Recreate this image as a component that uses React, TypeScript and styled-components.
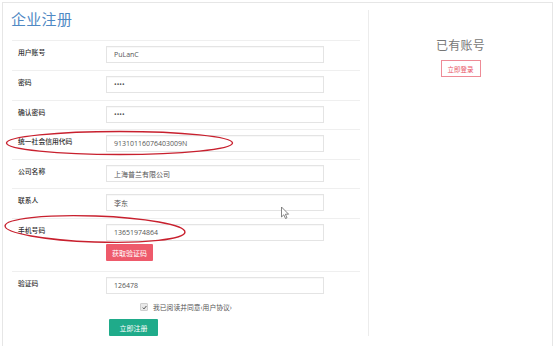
import React from 'react';
import styled, { createGlobalStyle } from 'styled-components';

const GlobalStyle = createGlobalStyle`
  html, body {
    margin: 0;
    padding: 0;
    background: #fff;
  }
  body {
    font-family: "Open Sans", "Noto Sans CJK SC", sans-serif;
  }
`;

const Page = styled.div`
  position: relative;
  width: 553px;
  height: 346px;
  overflow: hidden;
  padding: 2px 0 0 2px;
  box-sizing: border-box;
`;

const Frame = styled.div`
  display: flex;
  width: 551px;
  height: 360px;
  box-sizing: border-box;
  border: 1px solid #e6e6e6;
  padding-top: 7px;
`;

const LeftCol = styled.div`
  width: 366px;
  height: 326px;
  box-sizing: border-box;
  border-right: 1px solid #ececec;
  padding: 0 8px 0 9px;
  display: flex;
  flex-direction: column;
`;

const Title = styled.h1`
  margin: 0 0 12px -1px;
  font-size: 15px;
  line-height: 18px;
  font-weight: 400;
  color: #4f89c4;
  letter-spacing: 0.3px;
`;

const Row = styled.div<{ $h: number }>`
  display: flex;
  height: ${(p) => p.$h}px;
  box-sizing: border-box;
  border-top: 1px solid #efefef;
  padding: 5px 0 0 6px;
`;

const Label = styled.div`
  width: 88px;
  flex-shrink: 0;
  padding-top: 2px;
  font-size: 6.8px;
  line-height: 10px;
  font-weight: 500;
  color: #2f2f2f;
`;

const Field = styled.div`
  display: flex;
  flex-direction: column;
  align-items: flex-start;
`;

const Input = styled.div`
  width: 218px;
  height: 17px;
  box-sizing: border-box;
  border: 1px solid #e4e4e4;
  box-shadow: inset 0 1px 1px rgba(0, 0, 0, 0.03);
  padding-left: 7px;
  display: flex;
  align-items: center;
  font-size: 7px;
  color: #555;
`;

const Btn = styled.div<{ $bg: string; $w?: number }>`
  height: 17px;
  width: ${(p) => (p.$w ? `${p.$w}px` : 'auto')};
  padding: 0 ${(p) => (p.$w ? 0 : 6)}px;
  display: inline-flex;
  align-items: center;
  justify-content: center;
  background: ${(p) => p.$bg};
  color: #fff;
  font-size: 7px;
  border-radius: 1px;
`;

const VerifyBtn = styled(Btn)`
  margin-top: 3px;
`;

const SubmitBtn = styled(Btn)`
  margin: 7px 0 0 3px;
`;

const AgreeLine = styled.div`
  display: flex;
  align-items: center;
  gap: 5px;
  margin: 8px 0 0 34px;
  font-size: 6.8px;
  color: #555;
`;

const Check = styled.span`
  width: 6px;
  height: 6px;
  display: inline-flex;
  align-items: center;
  justify-content: center;
  background: #e9e9e9;
  border: 1px solid #cfcfcf;
  border-radius: 1px;
`;

const RightCol = styled.div`
  flex: 1;
  display: flex;
  flex-direction: column;
  align-items: center;
  padding-top: 29px;
`;

const Have = styled.div`
  font-size: 12px;
  line-height: 14px;
  color: #777;
  letter-spacing: 0.2px;
`;

const LoginBtn = styled.div`
  margin-top: 7px;
  width: 40px;
  height: 17px;
  box-sizing: border-box;
  border: 1px solid #ee8b96;
  color: #e85466;
  font-size: 6.5px;
  display: flex;
  align-items: center;
  justify-content: center;
`;

const Overlay = styled.svg`
  position: absolute;
  left: 0;
  top: 0;
  pointer-events: none;
`;

const rows: { label: string; value: string; h: number }[] = [
  { label: '用户账号', value: 'PuLanC', h: 30 },
  { label: '密码', value: '••••', h: 30 },
  { label: '确认密码', value: '••••', h: 29 },
  { label: '统一社会信用代码', value: '91310116076403009N', h: 30 },
  { label: '公司名称', value: '上海普兰有限公司', h: 29 },
  { label: '联系人', value: '李东', h: 30 },
];

export default function App() {
  return (
    <Page>
      <GlobalStyle />
      <Frame>
        <LeftCol>
          <Title>企业注册</Title>
          {rows.map((r) => (
            <Row key={r.label} $h={r.h}>
              <Label>{r.label}</Label>
              <Input>{r.value}</Input>
            </Row>
          ))}
          <Row $h={53}>
            <Label>手机号码</Label>
            <Field>
              <Input>13651974864</Input>
              <VerifyBtn $bg="#ee5a6b">获取验证码</VerifyBtn>
            </Field>
          </Row>
          <Row $h={65}>
            <Label>验证码</Label>
            <Field>
              <Input>126478</Input>
              <AgreeLine>
                <Check>
                  <svg width="5" height="5" viewBox="0 0 10 10">
                    <path d="M1.5 5.2 L4 7.8 L8.8 2" fill="none" stroke="#444" strokeWidth="1.8" />
                  </svg>
                </Check>
                我已阅读并同意‹用户协议›
              </AgreeLine>
              <SubmitBtn $bg="#1fab8a" $w={49}>立即注册</SubmitBtn>
            </Field>
          </Row>
        </LeftCol>
        <RightCol>
          <Have>已有账号</Have>
          <LoginBtn>立即登录</LoginBtn>
        </RightCol>
      </Frame>
      <Overlay width="553" height="346" viewBox="0 0 553 346">
        <ellipse cx="119.5" cy="143" rx="113" ry="11.5" fill="none" stroke="#c8202e" strokeWidth="1.4" />
        <ellipse cx="95" cy="229" rx="90" ry="13" fill="none" stroke="#c8202e" strokeWidth="1.4" transform="rotate(2 95 229)" />
        <path d="M281.5 207 L281.5 217 L283.8 214.8 L285.5 218.5 L287 217.8 L285.4 214.2 L288.6 214.2 Z" fill="#fff" stroke="#666" strokeWidth="0.8" strokeLinejoin="round" />
      </Overlay>
    </Page>
  );
}
